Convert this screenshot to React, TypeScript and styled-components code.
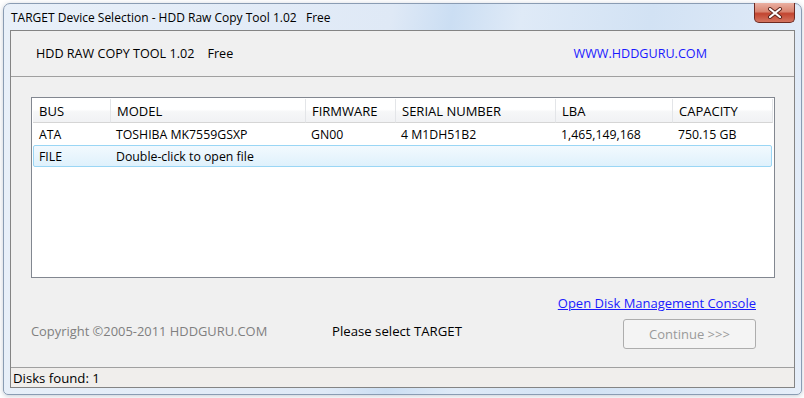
import styled, { createGlobalStyle } from "styled-components";

const GlobalStyle = createGlobalStyle`
  html, body {
    margin: 0;
    padding: 0;
    background: #ffffff;
  }
  body {
    font-family: "Open Sans", "Noto Sans", "Liberation Sans", sans-serif;
    font-size: 12px;
    color: #000;
  }
`;

const Frame = styled.div`
  position: relative;
  margin: 3px 2px 4px 3px;
  width: 799px;
  height: 392px;
  box-sizing: border-box;
  padding: 0 6px 6px 6px;
  border: 1px solid #8a9cb3;
  border-radius: 7px 7px 5px 5px;
  background: linear-gradient(
    100deg,
    #e9f0f9 0%,
    #dfe9f6 45%,
    #cbdef3 52%,
    #dfeaf7 60%,
    #d2e2f4 75%,
    #e6eef9 100%
  );
  box-shadow: 0 1px 5px rgba(60, 80, 110, 0.3);
  display: flex;
  flex-direction: column;
`;

const TitleBar = styled.div`
  flex-shrink: 0;
  height: 26px;
  display: flex;
  align-items: center;
  padding-left: 1px;
  white-space: pre;
  font-size: 12px;
  color: #000;
`;

const CloseButton = styled.div`
  position: absolute;
  top: -1px;
  right: 6px;
  width: 41px;
  height: 20px;
  box-sizing: border-box;
  border: 1px solid #6d2a21;
  border-top: none;
  border-radius: 0 0 5px 5px;
  background: linear-gradient(#eab0a2 0%, #d98571 45%, #c24530 56%, #d47560 100%);
  display: flex;
  align-items: center;
  justify-content: center;
`;

const Client = styled.div`
  flex-shrink: 0;
  height: 358px;
  box-sizing: border-box;
  display: flex;
  flex-direction: column;
  background: #f0f0f0;
  border: 1px solid #848484;
`;

const Header = styled.div`
  flex-shrink: 0;
  height: 45px;
  display: flex;
  align-items: center;
  padding: 0 87px 0 25px;
  border-bottom: 1px solid #a0a0a0;
  font-size: 12.6px;
  white-space: pre;
`;

const Spacer = styled.div`
  flex: 1;
`;

const SiteLink = styled.span`
  color: #1a1aff;
`;

const Body = styled.div`
  flex-shrink: 0;
  padding: 20px 19px 0 20px;
`;

const ListView = styled.div`
  height: 181px;
  box-sizing: border-box;
  border: 1px solid #828790;
  background: #fff;
  padding: 1px;
`;

const Grid = styled.div`
  display: grid;
  grid-template-columns: 78px 195px 90px 160px 117px 100px;
`;

const HeadCell = styled.div`
  height: 23px;
  display: flex;
  align-items: center;
  padding-left: 6px;
  font-size: 13px;
  white-space: nowrap;
  background: linear-gradient(#ffffff 0%, #ffffff 45%, #f6f7f8 55%, #f1f2f4 100%);
  border-right: 1px solid #e3e5e8;
  border-bottom: 1px solid #d5d5d5;
`;

const Row = styled.div<{ $selected?: boolean }>`
  grid-column: 1 / -1;
  display: grid;
  grid-template-columns: subgrid;
  height: 22px;
  align-items: center;
  box-sizing: border-box;
  margin-right: 1px;
  border: 1px solid ${(p) => (p.$selected ? "#9ad6f5" : "transparent")};
  border-radius: 2px;
  background: ${(p) =>
    p.$selected ? "linear-gradient(#f2f9fe, #dff1fc)" : "transparent"};
`;

const Cell = styled.div`
  padding-left: 5px;
  white-space: nowrap;
  font-size: 12.3px;
`;

const Bottom = styled.div`
  flex-shrink: 0;
  display: grid;
  grid-template-columns: 301px 1fr auto;
  grid-template-rows: 25px 30px;
  padding: 16px 38px 0 20px;
  height: 89px;
  box-sizing: border-box;
`;

const Copyright = styled.div`
  grid-column: 1;
  grid-row: 2;
  align-self: start;
  margin-top: 3px;
  color: #7f7f7f;
  font-size: 12.9px;
  white-space: nowrap;
`;

const Prompt = styled.div`
  grid-column: 2;
  grid-row: 2;
  align-self: start;
  margin-top: 3px;
  font-size: 13.2px;
`;

const ManageLink = styled.a`
  grid-column: 3;
  grid-row: 1;
  justify-self: end;
  align-self: start;
  color: #1a1aff;
  text-decoration: underline;
  font-size: 13px;
  white-space: nowrap;
`;

const ContinueButton = styled.button`
  grid-column: 3;
  grid-row: 2;
  justify-self: end;
  width: 133px;
  height: 30px;
  border: 1px solid #adadad;
  border-radius: 3px;
  background: #f4f4f4;
  color: #9a9a9a;
  font-family: inherit;
  font-size: 13px;
`;

const StatusBar = styled.div`
  margin-top: auto;
  height: 19px;
  display: flex;
  align-items: center;
  padding-left: 2px;
  border-top: 1px solid #a0a0a0;
  background: #f0eeec;
  font-size: 13.2px;
`;

const columns = ["BUS", "MODEL", "FIRMWARE", "SERIAL NUMBER", "LBA", "CAPACITY"];

const rows = [
  { cells: ["ATA", "TOSHIBA MK7559GSXP", "GN00", "4 M1DH51B2", "1,465,149,168", "750.15 GB"] },
  { cells: ["FILE", "Double-click to open file", "", "", "", ""], selected: true },
];

const App = () => {
  return (
    <>
      <GlobalStyle />
      <Frame>
        <TitleBar>TARGET Device Selection - HDD Raw Copy Tool 1.02   Free</TitleBar>
        <CloseButton>
          <svg width="16" height="12" viewBox="0 0 16 12">
            <path
              d="M3 2 L13 10 M13 2 L3 10"
              stroke="#5a231b"
              strokeWidth="4"
              strokeLinecap="round"
            />
            <path
              d="M3 2 L13 10 M13 2 L3 10"
              stroke="#ffffff"
              strokeWidth="2.2"
              strokeLinecap="round"
            />
          </svg>
        </CloseButton>
        <Client>
          <Header>
            <span>HDD RAW COPY TOOL 1.02    Free</span>
            <Spacer />
            <SiteLink>WWW.HDDGURU.COM</SiteLink>
          </Header>
          <Body>
            <ListView>
              <Grid>
                {columns.map((c) => (
                  <HeadCell key={c}>{c}</HeadCell>
                ))}
                {rows.map((r, i) => (
                  <Row key={i} $selected={r.selected}>
                    {r.cells.map((c, j) => (
                      <Cell key={j}>{c}</Cell>
                    ))}
                  </Row>
                ))}
              </Grid>
            </ListView>
          </Body>
          <Bottom>
            <ManageLink href="#">Open Disk Management Console</ManageLink>
            <Copyright>Copyright ©2005-2011 HDDGURU.COM</Copyright>
            <Prompt>Please select TARGET</Prompt>
            <ContinueButton disabled>Continue &gt;&gt;&gt;</ContinueButton>
          </Bottom>
          <StatusBar>Disks found: 1</StatusBar>
        </Client>
      </Frame>
    </>
  );
};

export default App;
